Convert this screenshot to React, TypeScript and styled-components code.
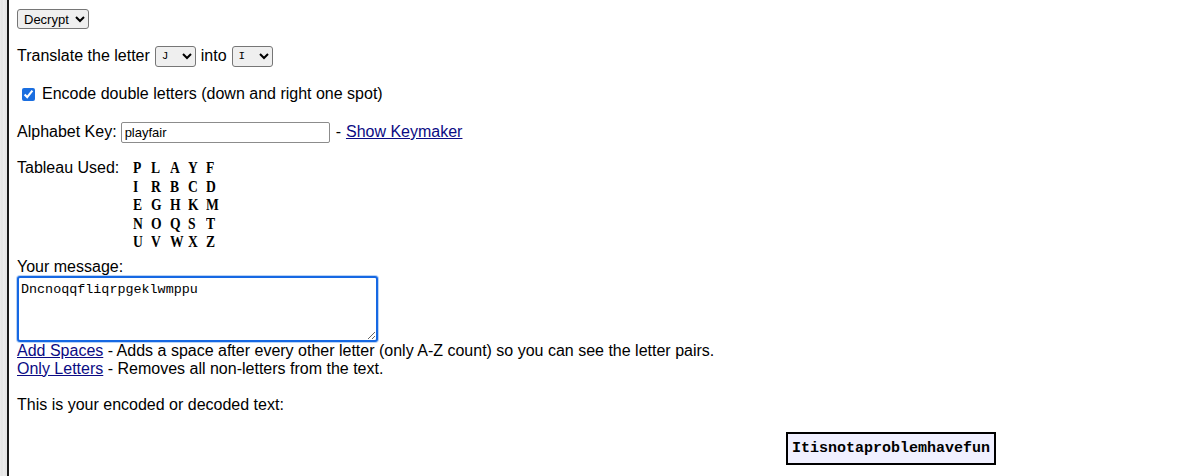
import React, { useState } from "react";
import styled, { createGlobalStyle } from "styled-components";

const tableau = [
	["P", "L", "A", "Y", "F"],
	["I", "R", "B", "C", "D"],
	["E", "G", "H", "K", "M"],
	["N", "O", "Q", "S", "T"],
	["U", "V", "W", "X", "Z"],
];

const letters = "ABCDEFGHIJKLMNOPQRSTUVWXYZ".split("");

const App = () => {
	const [mode, setMode] = useState("decrypt");
	const [from, setFrom] = useState("J");
	const [into, setInto] = useState("I");
	const [doubles, setDoubles] = useState(true);
	const [key, setKey] = useState("playfair");
	const [message, setMessage] = useState("Dncnoqqfliqrpgeklwmppu");

	return (
		<>
			<GlobalStyle />
			<Page>
				<ModeSelect value={mode} onChange={(e) => setMode(e.target.value)}>
					<option value="encrypt">Encrypt</option>
					<option value="decrypt">Decrypt</option>
				</ModeSelect>

				<Row>
					Translate the letter
					<LetterSelect value={from} onChange={(e) => setFrom(e.target.value)}>
						{letters.map((l) => (
							<option key={l}>{l}</option>
						))}
					</LetterSelect>
					into
					<LetterSelect value={into} onChange={(e) => setInto(e.target.value)}>
						{letters.map((l) => (
							<option key={l}>{l}</option>
						))}
					</LetterSelect>
				</Row>

				<CheckRow>
					<input type="checkbox" checked={doubles} onChange={() => setDoubles(!doubles)} />
					Encode double letters (down and right one spot)
				</CheckRow>

				<Row>
					Alphabet Key:
					<KeyInput value={key} onChange={(e) => setKey(e.target.value)} />
					- <Link href="#">Show Keymaker</Link>
				</Row>

				<TableauRow>
					<TableauLabel>Tableau Used:</TableauLabel>
					<Grid>
						{tableau.flat().map((l, i) => (
							<Cell key={i}>{l}</Cell>
						))}
					</Grid>
				</TableauRow>

				<Label>Your message:</Label>
				<Message value={message} onChange={(e) => setMessage(e.target.value)} spellCheck={false} />
				<Help>
					<Link href="#">Add Spaces</Link> - Adds a space after every other letter (only A-Z count) so you can
					see the letter pairs.
				</Help>
				<Help>
					<Link href="#">Only Letters</Link> - Removes all non-letters from the text.
				</Help>

				<Row>This is your encoded or decoded text:</Row>

				<Output>Itisnotaproblemhavefun</Output>
			</Page>
		</>
	);
};

export default App;

const GlobalStyle = createGlobalStyle`
	html, body {
		margin: 0;
		padding: 0;
	}

	body {
		background: repeating-linear-gradient(
			90deg,
			#ececec 0px,
			#e3e3e3 2px,
			#efefef 4px
		);
		font-family: "Liberation Sans", Arial, sans-serif;
		font-size: 16px;
		color: #000;
	}
`;

const Page = styled.div`
	margin-left: 7px;
	border-left: 2px solid #1a1a1a;
	background: #fff;
	min-height: 476px;
	box-sizing: border-box;
	padding: 9px 0 0 8px;
`;

const ModeSelect = styled.select`
	display: block;
	height: 20px;
	width: 72px;
	font-family: "Liberation Sans", Arial, sans-serif;
	font-size: 13px;
	border: 1px solid #767676;
	border-radius: 3px;
	background: #efefef;
	padding: 0 2px;
`;

const Row = styled.div`
	display: flex;
	align-items: center;
	gap: 5px;
	margin-top: 16px;
	min-height: 22px;
	line-height: 18px;
`;

const LetterSelect = styled.select`
	width: 41px;
	height: 21px;
	font-family: "Liberation Mono", monospace;
	font-size: 11px;
	border: 1px solid #767676;
	border-radius: 3px;
	background: #efefef;
	padding: 0 2px;
`;

const CheckRow = styled.label`
	display: flex;
	align-items: center;
	gap: 7px;
	margin-top: 16px;
	height: 22px;
	padding-left: 5px;

	input {
		margin: 0;
		width: 13px;
		height: 13px;
		accent-color: #1a6ee0;
	}
`;

const KeyInput = styled.input`
	width: 209px;
	height: 21px;
	box-sizing: border-box;
	font-family: "Liberation Sans", Arial, sans-serif;
	font-size: 13px;
	border: 1px solid #8c8c8c;
	border-radius: 2px;
	padding: 1px 3px;
	margin-left: -1px;
	margin-right: 1px;
`;

const Link = styled.a`
	color: #0b0b84;
	text-decoration: underline;
`;

const TableauRow = styled.div`
	display: flex;
	margin-top: 16px;
`;

const TableauLabel = styled.div`
	width: 116px;
	line-height: 18.5px;
`;

const Grid = styled.div`
	display: grid;
	grid-template-columns: repeat(5, 18.3px);
	grid-auto-rows: 18.5px;
	font-family: "Liberation Serif", "DejaVu Serif", serif;
	font-weight: bold;
	font-size: 16px;
`;

const Cell = styled.span`
	line-height: 18.5px;
	display: inline-block;
	transform: scaleX(0.85);
	transform-origin: left center;
`;

const Label = styled.div`
	line-height: 18px;
	margin-top: 6px;
`;

const Message = styled.textarea`
	display: block;
	width: 361px;
	height: 66px;
	box-sizing: border-box;
	font-family: "Liberation Mono", monospace;
	font-size: 13.4px;
	padding: 4px 2px;
	border: 2px solid #1668e3;
	border-radius: 3px;
	box-shadow: 0 0 0 1px #b9d3f5;
	outline: none;
	resize: vertical;
`;

const Help = styled.div`
	line-height: 18px;
`;

const Output = styled.div`
	margin: 16px 0 0 769px;
	width: fit-content;
	border: 2px solid #000;
	background: #f0f0ff;
	padding: 6px 4px 5px;
	font-family: "Liberation Mono", monospace;
	font-weight: bold;
	font-size: 15px;
	line-height: 18px;
`;
